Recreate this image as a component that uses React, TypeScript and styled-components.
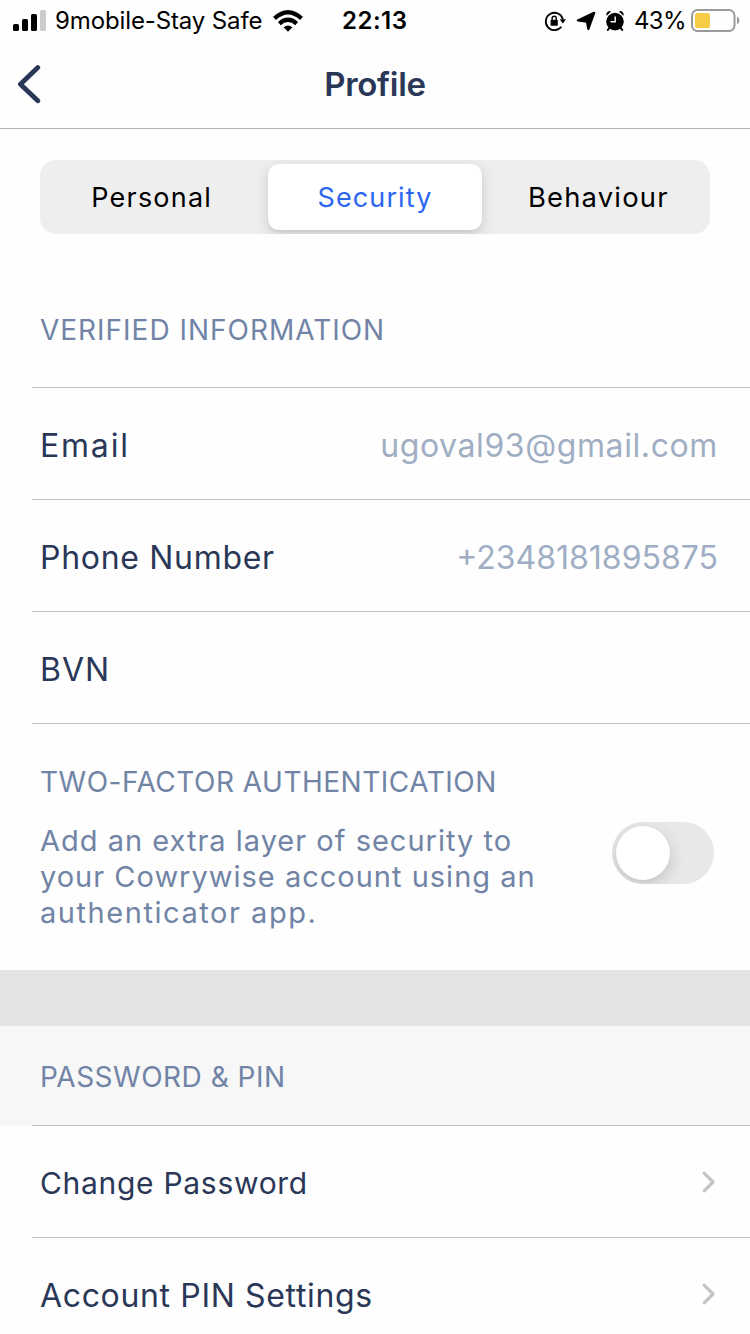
import React from "react";
import styled, { createGlobalStyle } from "styled-components";

const GlobalStyle = createGlobalStyle`
  * { box-sizing: border-box; }
  body {
    margin: 0;
    background: #fff;
    font-family: Inter, "Liberation Sans", sans-serif;
    overflow: hidden;
  }
`;

const ink = "#2a3757";
const slate = "#7184a6";
const mist = "#a0aec4";
const rule = "#c3c3c5";

const Screen = styled.div`
  width: 750px;
  height: 1334px;
  overflow: hidden;
  background: #fefefe;
  display: flex;
  flex-direction: column;
`;

const Label = styled.span<{ $size: number; $spacing?: number; $color?: string; $weight?: number }>`
  font-size: ${(p) => p.$size}px;
  letter-spacing: ${(p) => p.$spacing ?? 0}px;
  color: ${(p) => p.$color ?? ink};
  font-weight: ${(p) => p.$weight ?? 400};
  white-space: nowrap;
`;

const StatusBar = styled.div`
  flex: none;
  height: 40px;
  display: grid;
  grid-template-columns: 342px 1fr auto;
  align-items: center;
  padding-right: 10px;
  line-height: 40px;

  ${Label} {
    padding-top: 1px;
  }
`;

const Carrier = styled.div`
  display: flex;
  align-items: center;
  padding-left: 13px;
  height: 40px;
  svg { flex: none; }
`;

const StatusIcons = styled.div`
  display: flex;
  align-items: center;
  height: 40px;
`;

const NavBar = styled.header`
  flex: none;
  height: 89px;
  border-bottom: 1px solid #b3b3b4;
  display: grid;
  grid-template-columns: 100px 1fr 100px;
  align-items: center;
  justify-items: center;
`;

const BackButton = styled.button`
  justify-self: start;
  border: 0;
  padding: 0 0 0 16px;
  background: none;
  display: flex;
`;

const Segments = styled.div`
  flex: none;
  margin: 31px 40px 0;
  height: 74px;
  border-radius: 16px;
  background: #eee;
  display: grid;
  grid-template-columns: repeat(3, 1fr);
  overflow: hidden;
`;

const Segment = styled.button<{ $active?: boolean }>`
  border: 0;
  padding: 0;
  margin: 4px 5px;
  border-radius: 11px;
  background: ${(p) => (p.$active ? "#fff" : "transparent")};
  box-shadow: ${(p) => (p.$active ? "0 4px 14px rgba(0,0,0,.15), 0 2px 3px rgba(0,0,0,.05)" : "none")};
  font-family: inherit;
`;

const SectionHead = styled.div<{ $height: number; $shaded?: boolean; $shift?: number }>`
  flex: none;
  height: ${(p) => p.$height}px;
  padding: ${(p) => p.$shift ?? 0}px 0 0 40px;
  display: flex;
  align-items: center;
  background: ${(p) => (p.$shaded ? "#f7f7f7" : "transparent")};
`;

const List = styled.div<{ $shaded?: boolean }>`
  flex: none;
  background: ${(p) => (p.$shaded ? "linear-gradient(#f7f7f7 1px, transparent 1px)" : "none")};
`;

const Row = styled.div<{ $shift?: number }>`
  margin-left: 32px;
  height: 112px;
  padding: ${(p) => p.$shift ?? 4}px 32px 0 8px;
  border-top: 1px solid ${rule};
  display: flex;
  align-items: center;
  justify-content: space-between;
`;

const TwoFactor = styled.section`
  flex: none;
  margin-left: 32px;
  height: 247px;
  border-top: 1px solid ${rule};
  padding: 38px 36px 0 8px;
  display: flex;
  flex-direction: column;
  line-height: 40px;
`;

const TwoFactorBody = styled.div`
  display: flex;
  justify-content: space-between;
  align-items: flex-start;
  line-height: 36px;
  margin-top: 21px;
`;

const Switch = styled.div`
  width: 102px;
  height: 62px;
  margin-top: -1px;
  border-radius: 31px;
  background: #e8e8e8;
  padding: 4px;
  overflow: hidden;
`;

const Knob = styled.div`
  width: 54px;
  height: 54px;
  border-radius: 50%;
  background: #fff;
  box-shadow: 0 5px 16px rgba(0, 0, 0, 0.16), 0 1px 2px rgba(0, 0, 0, 0.04);
`;

const Band = styled.div`
  flex: none;
  height: 56px;
  background: #e4e4e4;
`;

const ChevronIcon = styled.svg<{ $lift: number }>`
  flex: none;
  margin: -${(p) => p.$lift}px 3px 0 0;
`;

const Chevron = ({ lift = 2 }: { lift?: number }) => (
  <ChevronIcon $lift={lift} width="13" height="22" viewBox="0 0 13 22" fill="none" stroke="#c4c4c6" strokeWidth="3.2" strokeLinecap="round" strokeLinejoin="round">
    <path d="M2.2 2.2 L11 11 L2.2 19.8" />
  </ChevronIcon>
);

const Signal = () => (
  <svg width="34" height="22" viewBox="0 0 34 22">
    <rect x="0" y="14" width="6" height="7" rx="1.6" />
    <rect x="9" y="9" width="6" height="12" rx="1.6" />
    <rect x="18" y="4" width="6" height="17" rx="1.6" />
    <rect x="27" y="0" width="6" height="21" rx="1.6" fill="#ccc" />
  </svg>
);

const Wifi = () => (
  <svg width="30" height="22" viewBox="0 0 30 22" fill="none" stroke="#000" strokeWidth="4.2">
    <path d="M1.5 8.4 Q15 -4 28.5 8.4" />
    <path d="M6.3 13.6 Q15 6 23.7 13.6" />
    <path d="M15 21.8 L10.6 17.3 Q15 13.7 19.4 17.3 Z" fill="#000" stroke="none" />
  </svg>
);

const RotationLock = () => (
  <svg width="22" height="22" viewBox="0 0 22 22" fill="none" stroke="#000" strokeWidth="1.8">
    <path d="M18.9 9.2 A8.7 8.7 0 1 0 17.4 16.8" />
    <path d="M15.6 9.2 H22 L18.8 13.6 Z" fill="#000" stroke="none" />
    <rect x="6.6" y="9.8" width="7.2" height="6" rx="0.8" fill="#000" stroke="none" />
    <path d="M8.1 10.4 V8.4 a2.1 2.1 0 0 1 4.2 0 V10.4" strokeWidth="1.4" />
  </svg>
);

const Location = () => (
  <svg width="20" height="20" viewBox="0 0 20 20">
    <path d="M18.2 1.8 L12.4 18 L10.9 10.6 L1.8 9.4 Z" stroke="#000" strokeWidth="2.2" strokeLinejoin="round" />
  </svg>
);

const Alarm = () => (
  <svg width="20" height="22" viewBox="0 0 20 22">
    <circle cx="10" cy="11.6" r="8.8" />
    <path d="M1.3 5 Q1.2 1.4 5 1.1 Q6 1.2 5.6 1.9 L2.2 5.2 Q1.4 5.8 1.3 5 Z M18.7 5 Q18.8 1.4 15 1.1 Q14 1.2 14.4 1.9 L17.8 5.2 Q18.6 5.8 18.7 5 Z" />
    <path d="M4.4 17.8 L2.8 20 M15.6 17.8 L17.2 20" stroke="#000" strokeWidth="2" strokeLinecap="round" />
    <path d="M10.2 6.4 V11.8 H5.6" fill="none" stroke="#fff" strokeWidth="1.4" />
  </svg>
);

const Battery = () => (
  <svg width="49" height="24" viewBox="0 0 49 24">
    <rect x="1" y="1" width="42.5" height="21" rx="5.5" fill="none" stroke="#9a9a9a" strokeWidth="2" />
    <rect x="4" y="4" width="15" height="15" rx="2.6" fill="#f6cb46" />
    <path d="M46 7.6 Q48.4 8.6 48.4 11.4 Q48.4 14.2 46 15.2 Z" fill="#9a9a9a" />
  </svg>
);

const Gap = styled.span<{ $w: number }>`
  flex: none;
  width: ${(p) => p.$w}px;
`;

export default function App() {
  return (
    <Screen>
      <GlobalStyle />
      <StatusBar>
        <Carrier>
          <Signal />
          <Gap $w={8} />
          <Label $size={24} $spacing={-0.12} $color="#000">9mobile-Stay Safe</Label>
          <Gap $w={11} />
          <Wifi />
        </Carrier>
        <Label $size={24} $spacing={0.5} $color="#000" $weight={600}>22:13</Label>
        <StatusIcons>
          <RotationLock />
          <Gap $w={10} />
          <Location />
          <Gap $w={9} />
          <Alarm />
          <Gap $w={9} />
          <Label $size={24} $spacing={-0.6} $color="#000">43%</Label>
          <Gap $w={5} />
          <Battery />
        </StatusIcons>
      </StatusBar>
      <NavBar>
        <BackButton aria-label="Back">
          <svg width="26" height="40" viewBox="0 0 26 40" fill="none" stroke={ink} strokeWidth="4.8" strokeLinecap="round" strokeLinejoin="round">
            <path d="M21.8 3.6 L4.4 20.2 L21.8 36.8" />
          </svg>
        </BackButton>
        <Label $size={33} $spacing={-0.3} $weight={600}>Profile</Label>
      </NavBar>
      <Segments>
        <Segment><Label $size={27} $spacing={1.2} $color="#000">Personal</Label></Segment>
        <Segment $active><Label $size={27} $spacing={1.1} $color="#2b66f0">Security</Label></Segment>
        <Segment><Label $size={27.4} $spacing={1.2} $color="#000">Behaviour</Label></Segment>
      </Segments>
      <SectionHead $height={153} $shift={38}>
        <Label $size={28} $spacing={0.98} $color={slate}>VERIFIED INFORMATION</Label>
      </SectionHead>
      <List>
        <Row>
          <Label $size={32} $spacing={1.8}>Email</Label>
          <Label $size={32} $spacing={0.6} $color={mist}>ugoval93@gmail.com</Label>
        </Row>
        <Row>
          <Label $size={32} $spacing={0.7}>Phone Number</Label>
          <Label $size={32} $spacing={0} $color={mist}>+2348181895875</Label>
        </Row>
        <Row>
          <Label $size={32} $spacing={1}>BVN</Label>
        </Row>
      </List>
      <TwoFactor>
        <Label $size={28} $spacing={0.5} $color={slate}>TWO-FACTOR AUTHENTICATION</Label>
        <TwoFactorBody>
          <div>
            <Label as="div" $size={29} $spacing={1} $color={slate}>Add an extra layer of security to</Label>
            <Label as="div" $size={29} $spacing={1} $color={slate}>your Cowrywise account using an</Label>
            <Label as="div" $size={29} $spacing={1.55} $color={slate}>authenticator app.</Label>
          </div>
          <Switch role="switch" aria-checked={false}><Knob /></Switch>
        </TwoFactorBody>
      </TwoFactor>
      <Band />
      <SectionHead $height={99} $shaded $shift={2}>
        <Label $size={28} $spacing={0.5} $color={slate}>PASSWORD &amp; PIN</Label>
      </SectionHead>
      <List $shaded>
        <Row $shift={2}>
          <Label $size={30} $spacing={0.7}>Change Password</Label>
          <Chevron />
        </Row>
        <Row>
          <Label $size={32} $spacing={0.65}>Account PIN Settings</Label>
          <Chevron lift={4} />
        </Row>
      </List>
    </Screen>
  );
}
